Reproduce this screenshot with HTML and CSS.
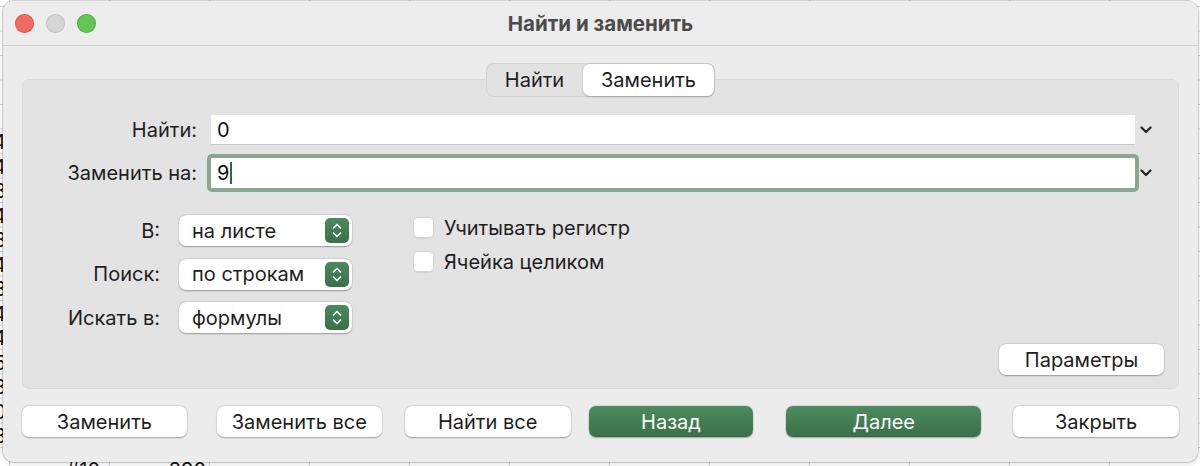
FILE: index.html
```html
<!DOCTYPE html>
<html lang="ru">
<head>
<meta charset="utf-8">
<title>Найти и заменить</title>
<link rel="stylesheet" href="styles.css">
</head>
<body>
<div class="sheet">
  <div class="sheet-nums">
    <span>4</span><span>4</span><span>3</span><span>4</span><span>3</span><span>4</span><span>3</span><span>4</span><span>4</span><span>5</span><span>3</span><span>0</span><span>3</span>
  </div>
  <div class="sheet-last"><span class="c1">#10</span><span class="c2">390</span></div>
</div>

<div class="window">
  <div class="titlebar">
    <div class="lights">
      <span class="light red"></span>
      <span class="light gray"></span>
      <span class="light green"></span>
    </div>
    <div class="title">Найти и заменить</div>
    <div></div>
  </div>

  <div class="content">
    <div class="tabs">
      <span class="tab">Найти</span>
      <span class="tab active">Заменить</span>
    </div>

    <div class="group">
      <div class="field">
        <span class="field-label">Найти:</span>
        <div class="input">0</div>
        <svg class="chev" width="12" height="8" viewBox="0 0 12 8"><path d="M1.5 1.5 L6 6 L10.5 1.5" fill="none" stroke="#222" stroke-width="2.2" stroke-linecap="round" stroke-linejoin="round"/></svg>
      </div>
      <div class="field">
        <span class="field-label">Заменить на:</span>
        <div class="input focused">9<span class="caret"></span></div>
        <svg class="chev" width="12" height="8" viewBox="0 0 12 8"><path d="M1.5 1.5 L6 6 L10.5 1.5" fill="none" stroke="#222" stroke-width="2.2" stroke-linecap="round" stroke-linejoin="round"/></svg>
      </div>

      <div class="options">
        <div class="popups">
          <span class="popup-label">В:</span>
          <div class="popup"><span>на листе</span><span class="stepper"><svg width="24" height="25" viewBox="0 0 24 25"><path d="M8.5 10 L12 6.5 L15.5 10 M8.5 15 L12 18.5 L15.5 15" fill="none" stroke="#fff" stroke-width="1.7" stroke-linecap="round" stroke-linejoin="round"/></svg></span></div>
          <span class="popup-label">Поиск:</span>
          <div class="popup"><span>по строкам</span><span class="stepper"><svg width="24" height="25" viewBox="0 0 24 25"><path d="M8.5 10 L12 6.5 L15.5 10 M8.5 15 L12 18.5 L15.5 15" fill="none" stroke="#fff" stroke-width="1.7" stroke-linecap="round" stroke-linejoin="round"/></svg></span></div>
          <span class="popup-label">Искать в:</span>
          <div class="popup"><span>формулы</span><span class="stepper"><svg width="24" height="25" viewBox="0 0 24 25"><path d="M8.5 10 L12 6.5 L15.5 10 M8.5 15 L12 18.5 L15.5 15" fill="none" stroke="#fff" stroke-width="1.7" stroke-linecap="round" stroke-linejoin="round"/></svg></span></div>
        </div>
        <div class="checks">
          <label class="check"><span class="box"></span>Учитывать регистр</label>
          <label class="check"><span class="box"></span>Ячейка целиком</label>
        </div>
      </div>

      <div class="params">
        <button class="btn btn-params">Параметры</button>
      </div>
    </div>

    <div class="actions">
      <button class="btn w165">Заменить</button>
      <button class="btn w165 ml30">Заменить все</button>
      <button class="btn w166 ml23">Найти все</button>
      <button class="btn primary w165 ml18">Назад</button>
      <button class="btn primary w195 ml33">Далее</button>
      <button class="btn w166 ml32">Закрыть</button>
    </div>
  </div>
</div>
</body>
</html>
```

FILE: styles.css
```css
* { box-sizing: border-box; }
html, body { margin: 0; padding: 0; }
body {
  width: 1200px;
  height: 466px;
  overflow: hidden;
  position: relative;
  background: #fff;
  font-family: Inter, "Noto Sans", sans-serif;
  color: #1e1e1e;
}

/* spreadsheet behind the dialog */
.sheet {
  position: absolute;
  inset: 0;
  background-color: #fff;
  background-image:
    linear-gradient(to right, #d4d4d4 1px, transparent 1px),
    linear-gradient(to bottom, #d4d4d4 1px, transparent 1px);
  background-size: 100px 100%, 100% 24.5px;
  background-position: 9px 0, 0 6px;
}
.sheet-nums {
  position: absolute;
  left: 0;
  top: 130px;
  width: 6px;
  display: flex;
  flex-direction: column;
  align-items: flex-end;
  overflow: hidden;
  font-size: 20px;
  color: #111;
}
.sheet-nums span { height: 24.5px; line-height: 24.5px; }
.sheet-last {
  position: absolute;
  left: 0;
  top: 458px;
  display: flex;
  font-size: 20px;
  color: #111;
}
.sheet-last .c1 { width: 100px; text-align: right; }
.sheet-last .c2 { width: 106px; text-align: right; }

/* dialog window */
.window {
  position: absolute;
  left: 3px;
  top: 1px;
  width: 1195px;
  height: 461px;
  background: #ececec;
  border-radius: 11px;
  box-shadow: 0 0 0 1px rgba(0,0,0,0.16), 0 2px 6px rgba(0,0,0,0.12);
  display: flex;
  flex-direction: column;
  overflow: hidden;
}

.titlebar {
  flex: none;
  height: 45px;
  display: grid;
  grid-template-columns: 1fr auto 1fr;
  align-items: center;
  border-bottom: 1px solid #d0d0d0;
  background: #ededed;
}
.lights { display: flex; gap: 12px; padding-left: 12px; }
.light { width: 19px; height: 19px; border-radius: 50%; }
.red { background: #ee6b5f; box-shadow: inset 0 0 0 1px rgba(200,70,60,0.45); }
.gray { background: #d6d6d6; box-shadow: inset 0 0 0 1px #c3c3c3; }
.green { background: #62c554; box-shadow: inset 0 0 0 1px rgba(60,160,50,0.45); }
.title {
  font-size: 20.5px;
  font-weight: 700;
  color: #4b4b4b;
}

.content {
  flex: 1;
  display: flex;
  flex-direction: column;
  padding: 17px 19px 0;
}

/* segmented control */
.tabs {
  align-self: center;
  position: relative;
  z-index: 1;
  display: flex;
  height: 34px;
  padding: 1px 1px 1px 0;
  background: #e2e2e2;
  border-radius: 8px;
  box-shadow: inset 0 0 0 1px #d3d3d3;
}
.tab {
  width: 97px;
  display: flex;
  align-items: center;
  justify-content: center;
  font-size: 20px;
}
.tab.active {
  width: 131px;
  background: #fff;
  border-radius: 7px;
  box-shadow: 0 0.5px 2px rgba(0,0,0,0.25);
}

/* group box */
.group {
  margin-top: -18px;
  background: #e3e3e3;
  border: 1px solid #dadada;
  border-radius: 7px;
  padding: 35px 0 13px;
}

.field {
  display: grid;
  grid-template-columns: 188px 1fr 43px;
  align-items: center;
  height: 30px;
}
.field + .field { margin-top: 13px; }
.field-label {
  text-align: right;
  padding-right: 14px;
  font-size: 20px;
}
.input {
  height: 30px;
  background: #fff;
  border-bottom: 1px solid #c8c8c8;
  display: flex;
  align-items: center;
  padding-left: 6px;
  font-size: 20px;
  color: #111;
}
.input.focused {
  border-bottom: none;
  outline: 4px solid #89a88d;
  border-radius: 1px;
}
.caret {
  display: inline-block;
  width: 2px;
  height: 22px;
  margin-left: 1px;
  background: #2c6a3c;
}
.chev { margin-left: 5px; }

/* options */
.options {
  display: flex;
  margin-top: 27px;
}
.popups {
  display: grid;
  grid-template-columns: 137px 173px;
  column-gap: 19px;
  row-gap: 12.5px;
  align-items: center;
}
.popup-label {
  text-align: right;
  font-size: 20px;
}
.popup {
  height: 31px;
  background: #fff;
  border-radius: 7px;
  box-shadow: 0 0.5px 1.5px rgba(0,0,0,0.3), 0 0 0 0.5px rgba(0,0,0,0.06);
  display: flex;
  align-items: center;
  justify-content: space-between;
  padding: 0 3px 0 13px;
  font-size: 20px;
}
.stepper {
  width: 24px;
  height: 25px;
  border-radius: 5px;
  background: linear-gradient(#4a8a5b, #3a7049);
  display: flex;
}

.checks {
  margin-left: 61px;
  padding-top: 2px;
  display: flex;
  flex-direction: column;
  gap: 13px;
}
.check {
  display: flex;
  align-items: center;
  gap: 10px;
  height: 21px;
  font-size: 20px;
}
.box {
  width: 21px;
  height: 21px;
  border-radius: 5px;
  background: #fff;
  box-shadow: inset 0 0 0 1px #d2d2d2, 0 0.5px 1px rgba(0,0,0,0.08);
}

.params {
  display: flex;
  justify-content: flex-end;
  padding-right: 14px;
  margin-top: 11px;
}

/* buttons */
.btn {
  height: 31px;
  border: none;
  padding: 0;
  background: #fff;
  border-radius: 7px;
  box-shadow: 0 0.5px 1.5px rgba(0,0,0,0.3), 0 0 0 0.5px rgba(0,0,0,0.06);
  font-family: Inter, "Noto Sans", sans-serif;
  font-size: 20px;
  color: #1e1e1e;
}
.btn.primary {
  background: linear-gradient(#4c8c5e, #3a7049);
  color: #fff;
}
.btn-params { width: 165px; }

.actions {
  display: flex;
  margin-top: 17px;
}
.w165 { width: 165px; }
.w166 { width: 166px; }
.w195 { width: 195px; }
.ml18 { margin-left: 18px; }
.ml23 { margin-left: 23px; }
.ml30 { margin-left: 30px; }
.ml32 { margin-left: 32px; }
.ml33 { margin-left: 33px; }
```
